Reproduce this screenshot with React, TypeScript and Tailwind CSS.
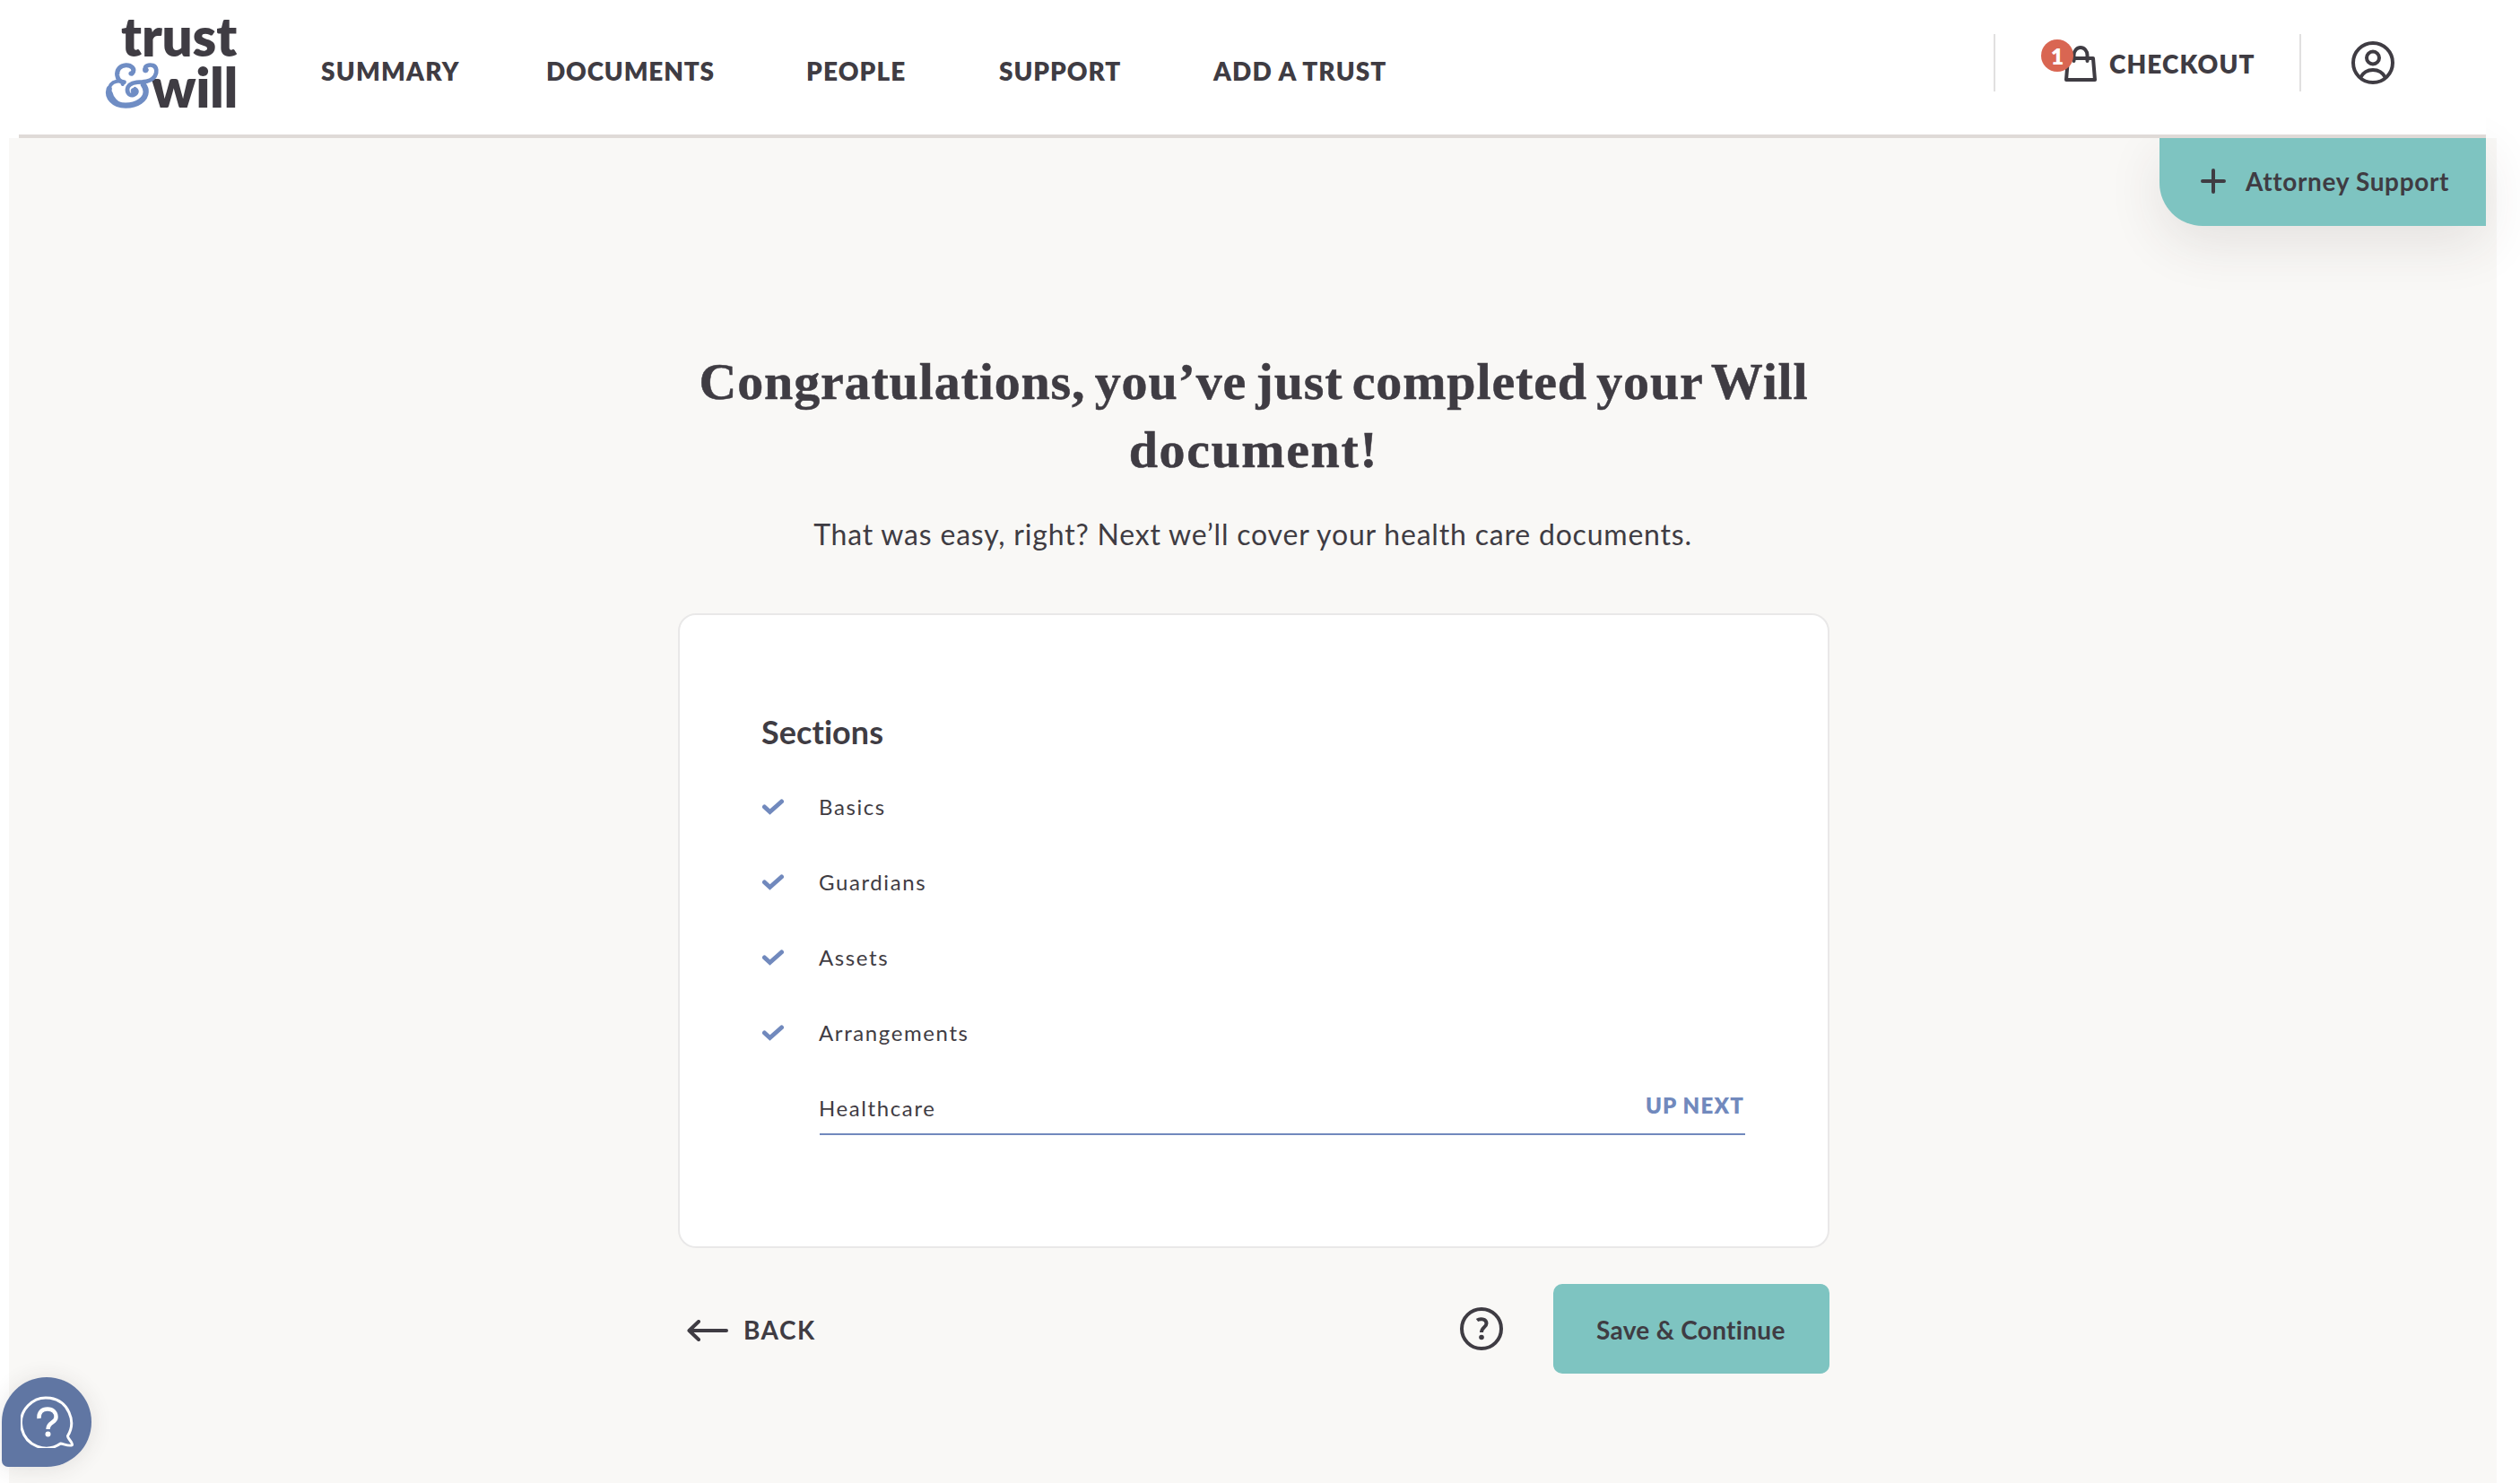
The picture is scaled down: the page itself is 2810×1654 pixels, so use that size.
import React from "react";

const sections = ["Basics", "Guardians", "Assets", "Arrangements"];

function Ampersand() {
  return (
    <svg viewBox="0 0 240 210" className="absolute left-0 top-[60px] h-[70px] w-[80px]" fill="none" stroke="#6f8dc4" strokeLinecap="round">
      <path strokeWidth="15" d="M112 66C125 50 108 37 91 38C72 39 60 53 62 72C64 87 71 94 85 95" />
      <path strokeWidth="12" d="M80 102C82 92 72 90 60 92C44 95 34 108 32 128" />
      <path strokeWidth="19" d="M35 118C27 145 50 173 90 173C130 173 157 152 158 128C159 118 156 112 150 104" />
      <path strokeWidth="13" d="M72 170C62 165 44 150 40 130M60 165C75 175 110 176 128 165" />
      <path strokeWidth="14" d="M157 54C150 41 168 35 182 39C195 44 196 62 188 75C179 89 163 93 146 94C124 94 105 97 98 111C92 127 100 141 116 138C128 134 131 124 122 118" />
      <circle cx="157" cy="54" r="9" fill="#6f8dc4" strokeWidth="2" />
      <circle cx="118" cy="125" r="10" fill="#6f8dc4" strokeWidth="2" />
      <circle cx="108" cy="66" r="7" fill="#6f8dc4" strokeWidth="2" />
    </svg>
  );
}

function Logo() {
  return (
    <div className="relative ml-[89px] h-[130px] w-[153px] font-extrabold text-[#3f3c43]">
      <div className="absolute right-[-1px] top-[4px] text-[60px] leading-[72px] tracking-[-0.2px]">trust</div>
      <div className="absolute right-[-2px] top-[60px] text-[61px] leading-[74px] tracking-[-0.4px]">will</div>
      <Ampersand />
    </div>
  );
}

function Bag() {
  return (
    <svg viewBox="0 0 36 40" className="h-[40px] w-[36px]" fill="none" stroke="#3f3c43" strokeWidth="4" strokeLinejoin="round">
      <path d="M4 14H32L34 38H2Z" />
      <path d="M10.500 17V10.500a7.500 8.500 0 0 1 15 0V17" strokeLinecap="round" />
    </svg>
  );
}

function User() {
  return (
    <svg viewBox="0 0 48 48" className="h-[48px] w-[48px]" fill="none" stroke="#3f3c43" strokeWidth="4">
      <circle cx="24" cy="24" r="22" />
      <circle cx="24" cy="18.500" r="7" />
      <path d="M10 40.500C13 35 18 32 24 32S35 35 38 40.500" />
    </svg>
  );
}

export default function App() {
  return (
    <div className="relative h-[1654px] w-[2810px] overflow-hidden bg-white font-['Lato',sans-serif] text-[#3f3c43]">
      <header className="relative z-10 ml-[21px] flex h-[154px] w-[2751px] items-start border-b-4 border-[#dfdad7] bg-white">
        <Logo />
        <nav className="ml-[95px] flex pt-[62px] text-[28px] font-extrabold leading-[34px]">
          <a className="w-[251px] tracking-[1.2px]">SUMMARY</a>
          <a className="w-[290px] tracking-[0.8px]">DOCUMENTS</a>
          <a className="w-[215px] tracking-[1.1px]">PEOPLE</a>
          <a className="w-[239px] tracking-[0.9px]">SUPPORT</a>
          <a className="w-[220px] tracking-[1.1px]">ADD A TRUST</a>
        </nav>
        <div className="ml-auto mr-[102px] flex items-start">
          <div className="mt-[38px] h-[64px] w-[2px] bg-[#e1e0e0]" />
          <div className="relative ml-[77px] mt-[51px]">
            <Bag />
            <span className="absolute left-[-26px] top-[-7px] flex h-[36px] w-[36px] items-center justify-center rounded-full bg-[#d96652] text-[25px] font-extrabold leading-[30px] text-white">1</span>
          </div>
          <span className="ml-[14px] mt-[54px] w-[212px] text-[28px] font-extrabold leading-[34px] tracking-[1.1px]">CHECKOUT</span>
          <div className="mt-[38px] h-[64px] w-[2px] bg-[#e1e0e0]" />
          <div className="ml-[56px] mt-[46px]">
            <User />
          </div>
        </div>
      </header>

      <main className="ml-[10px] flex h-[1500px] w-[2774px] flex-col bg-[#f9f8f6]">
        <button className="mr-[12px] flex h-[98px] w-[364px] items-center self-end rounded-bl-[48px] bg-[#7ec4c1] pb-[3px] pl-[46px] shadow-[0_20px_60px_rgba(60,50,50,0.11)]">
          <svg viewBox="0 0 28 28" className="h-[28px] w-[28px]" fill="none" stroke="#3f3c43" strokeWidth="4" strokeLinecap="round">
            <path d="M14 2V26M2 14H26" />
          </svg>
          <span className="ml-[22px] whitespace-nowrap text-[28px] font-bold leading-[34px] tracking-[0.650px]">Attorney Support</span>
        </button>

        <div className="ml-[746px] w-[1284px]">
          <h1 className="mt-[136px] text-center font-['Liberation_Serif',serif] text-[58px] font-bold leading-[76px] [-webkit-text-stroke:0.5px_#3f3c43]">
            <span className="block whitespace-nowrap tracking-[0.85px] [word-spacing:-5px]">Congratulations, you’ve just completed your Will</span>
            <span className="block tracking-[1.6px]">document!</span>
          </h1>
          <p className="ml-[-2px] mt-[32px] whitespace-nowrap text-center text-[32px] leading-[48px] tracking-[0.8px]">That was easy, right? Next we’ll cover your health care documents.</p>

          <section className="mt-[64px] h-[708px] rounded-[20px] border-2 border-[#e9e8e8] bg-white pl-[91px] pr-[92px] pt-[108px]">
            <h2 className="text-[36px] font-bold leading-[44px] tracking-[0.060px]">Sections</h2>
            <ul className="ml-px mt-[20px] text-[24px] leading-[84px] tracking-[1.6px]">
              {sections.map((s) => (
                <li key={s} className="flex h-[84px] items-center">
                  <svg viewBox="0 0 24 18" className="h-[18px] w-[24px]" fill="none" stroke="#7189bd" strokeWidth="5" strokeLinecap="round">
                    <path d="M2.500 9L8.500 14.500L21.500 3" />
                  </svg>
                  <span className="ml-[39px]">{s}</span>
                </li>
              ))}
              <li className="ml-[64px] flex h-[72px] justify-between border-b-2 border-[#7189bd]">
                <span className="-ml-px">Healthcare</span>
                <span className="mr-px font-extrabold leading-[77px] tracking-[1.200px] text-[#7189bd]">UP NEXT</span>
              </li>
            </ul>
          </section>

          <div className="mt-[40px] flex h-[100px] items-center">
            <button className="ml-[10px] flex items-center">
              <svg viewBox="0 0 46 24" className="mt-[4px] h-[24px] w-[46px]" fill="none" stroke="#3f3c43" strokeWidth="4" strokeLinecap="round" strokeLinejoin="round">
                <path d="M44 12H2.500M13 2L2.500 12L13 22" />
              </svg>
              <span className="ml-[17px] mt-[2px] text-[28px] font-bold leading-[34px] tracking-[1.500px]">BACK</span>
            </button>
            <svg viewBox="0 0 48 48" className="ml-auto h-[48px] w-[48px]" fill="none" stroke="#3f3c43" strokeWidth="4">
              <circle cx="24" cy="24" r="22" />
              <path d="M19 14.500C22 12.300 29.500 12.500 29.500 18C29.500 22 24 22.500 24 28" />
              <circle cx="24" cy="33.500" r="2.800" fill="#3f3c43" stroke="none" />
            </svg>
            <button className="ml-[56px] flex h-[100px] w-[308px] items-center rounded-[10px] bg-[#7ec4c1] pl-[48px] pt-[2px] text-[28px] font-bold leading-[34px] tracking-[0.300px]">
              Save &amp; Continue
            </button>
          </div>
        </div>
      </main>

      <button className="absolute bottom-[18px] left-[2px] z-20 flex h-[100px] w-[100px] items-center justify-center rounded-[50px] rounded-bl-[7px] bg-[#6076a3] shadow-[0_2px_24px_rgba(60,50,50,0.12)]">
        <svg viewBox="0 0 60 60" className="mb-[2px] ml-[2px] h-[60px] w-[60px]" fill="none" stroke="white" strokeWidth="3" strokeLinecap="round" strokeLinejoin="round">
          <path d="M44.500 55A28 28 0 1 1 52.500 46.500C52 49 58 53.500 57.500 56.500C55 58.500 48 55.500 44.500 55Z" />
          <path strokeWidth="4.500" strokeLinecap="butt" d="M20.500 27C20 20 24 16.500 30 16.500S39.500 20.500 39.500 25.500C39.500 32 30.500 31 30.500 39" />
          <circle cx="30.500" cy="44.500" r="1.500" fill="white" />
        </svg>
      </button>
    </div>
  );
}
